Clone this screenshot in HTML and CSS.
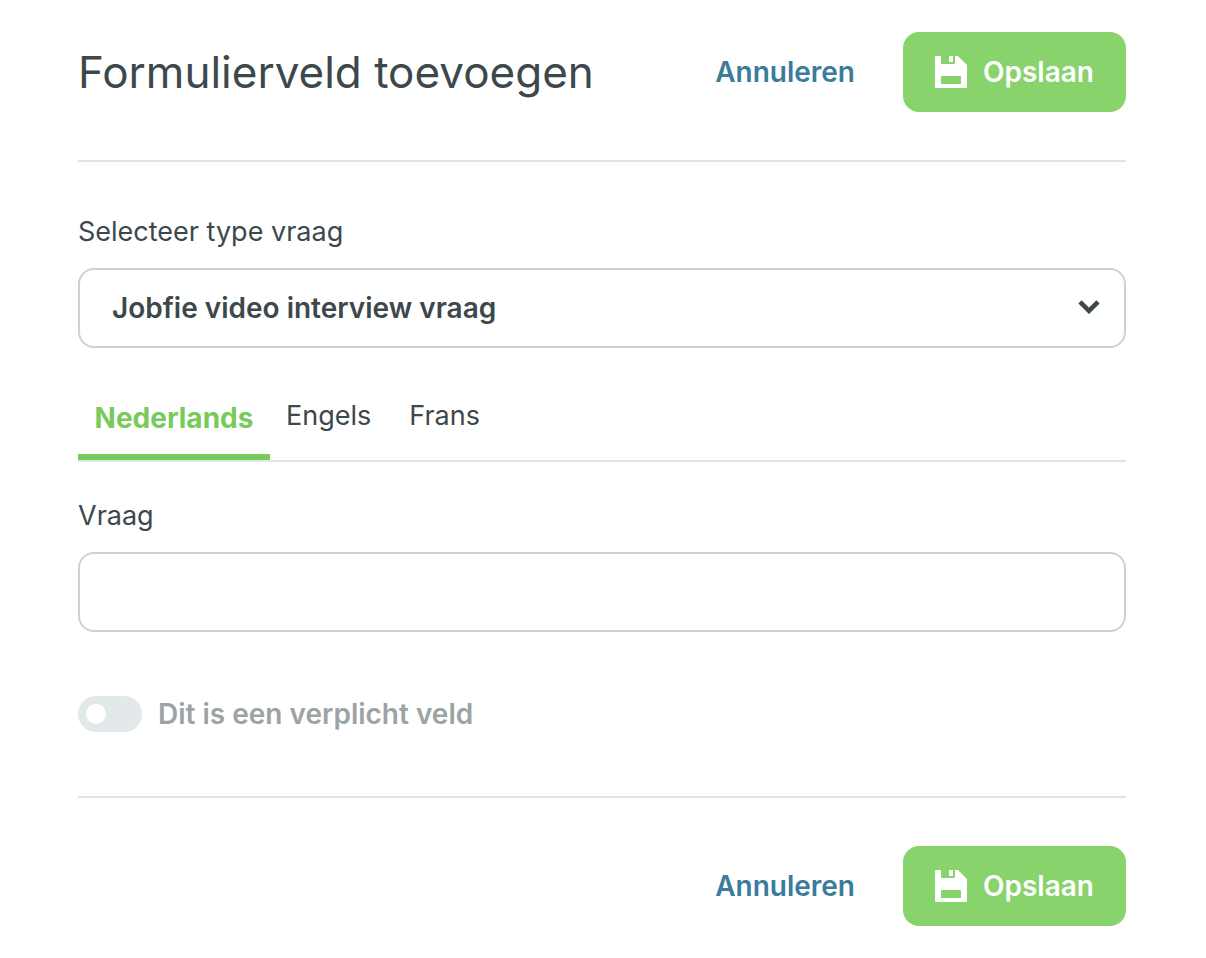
FILE: index.html
```
<!DOCTYPE html>
<html lang="nl">
<head>
<meta charset="UTF-8">
<title>Formulierveld toevoegen</title>
<meta name="viewport" content="width=device-width, initial-scale=1.0">
<link rel="stylesheet" href="styles.css">
</head>
<body>

	<form action="#" id="fieldForm" class="field-form">
		<header class="form-header">
			<h1>Formulierveld toevoegen</h1>
			<div class="actions">
				<a href="#" class="cancel">Annuleren</a>
				<button type="submit" class="save">
					<svg class="save-icon" viewBox="0 0 32 32" aria-hidden="true">
						<path fill-rule="evenodd" d="M1 0H6V7Q6 8 7 8H19Q20 8 20 7V0H23L32 9V31Q32 32 31 32H1Q0 32 0 31V1Q0 0 1 0ZM7 20Q6 20 6 21V28H26V21Q26 20 25 20Z"/>
						<path d="M14 0H18V6H14Z"/>
					</svg>
					Opslaan
				</button>
			</div>
		</header>

		<div class="form-body">
			<label for="questionType" class="field-label">Selecteer type vraag</label>
			<div class="select-wrap">
				<select id="questionType" class="field">
					<option>Jobfie video interview vraag</option>
				</select>
				<svg class="chevron" viewBox="0 0 22 14" aria-hidden="true">
					<path d="M2 1.8L11 10.8L20 1.8"/>
				</svg>
			</div>

			<nav class="tabs">
				<a href="#" class="tab active">Nederlands</a>
				<a href="#" class="tab">Engels</a>
				<a href="#" class="tab">Frans</a>
			</nav>

			<label for="question" class="field-label">Vraag</label>
			<input type="text" id="question" class="field">

			<label class="required">
				<input type="checkbox" class="toggle">
				Dit is een verplicht veld
			</label>
		</div>

		<footer class="actions form-footer">
			<a href="#" class="cancel">Annuleren</a>
			<button type="submit" class="save">
				<svg class="save-icon" viewBox="0 0 32 32" aria-hidden="true">
					<path fill-rule="evenodd" d="M1 0H6V7Q6 8 7 8H19Q20 8 20 7V0H23L32 9V31Q32 32 31 32H1Q0 32 0 31V1Q0 0 1 0ZM7 20Q6 20 6 21V28H26V21Q26 20 25 20Z"/>
					<path d="M14 0H18V6H14Z"/>
				</svg>
				Opslaan
			</button>
		</footer>
	</form>

</body>
</html>
```

FILE: styles.css
```
* {
	box-sizing: border-box;
}

body {
	margin: 0;
	background: #fff;
	color: #3c484c;
	font-family: Inter, "Liberation Sans", sans-serif;
	font-size: 28px;
	line-height: 36px;
}

.field-form {
	padding: 32px 80px 32px 78px;
}

.form-header {
	display: flex;
	justify-content: space-between;
	align-items: center;
	padding-bottom: 48px;
	border-bottom: 2px solid #dfe4e6;
}

h1 {
	margin: 0;
	font-size: 44px;
	line-height: 56px;
	font-weight: 400;
}

.actions {
	display: flex;
	justify-content: flex-end;
	align-items: center;
	gap: 48px;
}

.cancel {
	color: #3b7c9b;
	font-weight: 600;
	text-decoration: none;
}

.save {
	display: flex;
	align-items: center;
	gap: 16px;
	height: 80px;
	padding: 0 32px;
	border: 0;
	border-radius: 16px;
	background: #88d36c;
	color: #fff;
	font: inherit;
	font-weight: 600;
}

.save-icon {
	width: 32px;
	height: 32px;
	fill: currentColor;
}

.form-body {
	padding: 52px 0 64px;
	border-bottom: 2px solid #dfe4e6;
}

.form-footer {
	padding-top: 48px;
}

.field-label {
	display: block;
	margin-bottom: 18px;
	font-size: 27px;
}

.field {
	display: block;
	width: 100%;
	height: 80px;
	padding: 0 32px;
	border: 2px solid #c8d3d7;
	border-radius: 16px;
	background: #fff;
	color: inherit;
	font: inherit;
	font-weight: 600;
	appearance: none;
}

.select-wrap {
	position: relative;
}

.chevron {
	position: absolute;
	top: 32px;
	right: 26px;
	width: 22px;
	height: 14px;
	fill: none;
	stroke: #3c484c;
	stroke-width: 4.6;
	pointer-events: none;
}

.tabs {
	display: flex;
	height: 114px;
	padding-top: 50px;
	margin-bottom: 36px;
	border-bottom: 2px solid #dfe4e6;
}

.tab {
	padding: 0 22px 0 16px;
	color: inherit;
	font-size: 27px;
	text-decoration: none;
}

.tab.active {
	min-width: 192px;
	padding: 2px 16px 0;
	border-bottom: 6px solid #78ca5b;
	color: #78ca5b;
	font-size: 28px;
	font-weight: 700;
	text-align: center;
}

.required {
	display: flex;
	align-items: center;
	gap: 16px;
	margin-top: 64px;
	color: #9ca3a5;
	font-weight: 600;
}

.toggle {
	appearance: none;
	width: 64px;
	height: 36px;
	margin: 0;
	padding: 8px;
	border-radius: 18px;
	background: #e3e8ea;
}

.toggle::before {
	content: "";
	display: block;
	width: 20px;
	height: 20px;
	border-radius: 50%;
	background: #fff;
}

.toggle:checked {
	background: #88d36c;
}

.toggle:checked::before {
	margin-left: auto;
}
```
